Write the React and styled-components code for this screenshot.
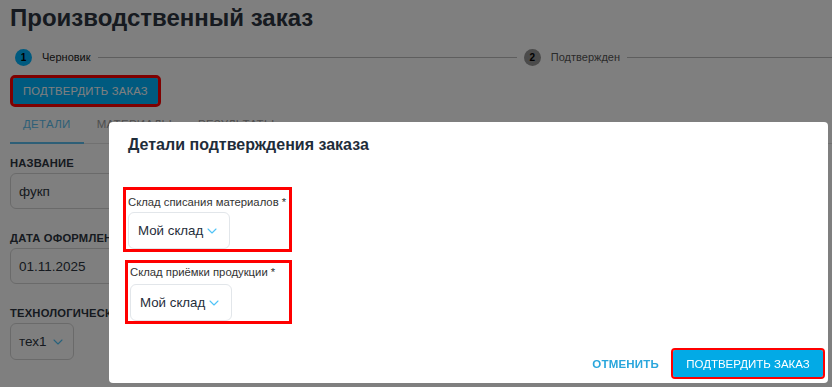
import React from 'react';
import styled, { createGlobalStyle } from 'styled-components';
import { ChevronDown } from 'lucide-react';

const GlobalStyle = createGlobalStyle`
  html, body {
    margin: 0;
    padding: 0;
    background: #fff;
    font-family: "Liberation Sans", Arial, sans-serif;
    color: #2c3e50;
    overflow: hidden;
  }
`;

const Page = styled.div`
  padding: 3px 0 0 10px;
  height: 387px;
  box-sizing: border-box;
`;

const Title = styled.h1`
  margin: 0;
  font-size: 24px;
  line-height: 30px;
  font-weight: 700;
  color: #2c3440;
`;

const Stepper = styled.div`
  display: flex;
  align-items: center;
  margin: 15px 0 0 5px;
  height: 18px;
`;

const StepCircle = styled.span`
  width: 17px;
  height: 17px;
  border-radius: 50%;
  background: ${p => (p.$active ? '#00b4fe' : '#969696')};
  color: #000;
  font-size: 10px;
  font-weight: 700;
  display: flex;
  align-items: center;
  justify-content: center;
  flex: 0 0 auto;
`;

const StepLabel = styled.span`
  font-size: 11px;
  color: ${p => (p.$active ? '#222' : '#555')};
  margin: 0 7px 0 10px;
  white-space: nowrap;
`;

const Connector = styled.span`
  height: 1px;
  background: #bdbdbd;
  flex: ${p => (p.$width ? `0 0 ${p.$width}px` : '1')};
  margin-right: ${p => (p.$width ? '0' : '7px')};
`;

const PageButton = styled.button`
  margin: 12px 0 0 3px;
  height: 26px;
  padding: 0 10px;
  border: none;
  border-radius: 2px;
  background: #00b4fe;
  color: #fff;
  font-family: inherit;
  font-size: 11.3px;
  font-weight: 500;
  letter-spacing: 0.2px;
  text-transform: uppercase;
  outline: 3px solid #ff0000;
`;

const Tabs = styled.div`
  display: flex;
  border-bottom: 1px solid #e2e2e2;
`;

const Tab = styled.div`
  padding: 13px 13px 11px;
  font-size: 11.5px;
  line-height: 14px;
  letter-spacing: 0.3px;
  text-transform: uppercase;
  color: ${p => (p.$active ? '#5dbfee' : '#9c9c9c')};
  border-bottom: 2px solid ${p => (p.$active ? '#5dbfee' : 'transparent')};
  margin-bottom: -1px;
`;

const Form = styled.div`
  display: flex;
  flex-direction: column;
  align-items: flex-start;
  padding-top: 12px;
`;

const FieldLabel = styled.div`
  font-size: 11.2px;
  font-weight: 700;
  letter-spacing: 0.2px;
  text-transform: uppercase;
  color: #2c3440;
  line-height: 14px;
  margin-bottom: 3px;
  white-space: nowrap;
`;

const TextBox = styled.div`
  width: 200px;
  height: 36px;
  box-sizing: border-box;
  border: 1px solid #d5d5d5;
  border-radius: 6px;
  display: flex;
  align-items: center;
  padding: 0 8px;
  font-size: 13.5px;
  color: #2c3440;
  margin-bottom: 22px;
`;

const SelectBox = styled.div`
  display: inline-flex;
  align-items: center;
  gap: ${p => (p.$compact ? '3px' : '1px')};
  height: 37px;
  box-sizing: border-box;
  border: 1px solid ${p => (p.$compact ? '#d5d5d5' : '#e2e6ea')};
  border-radius: 6px;
  padding: ${p => (p.$compact ? '0 7px 0 8px' : '0 9px 0 9px')};
  font-size: 13.5px;
  white-space: nowrap;
  color: #2c3440;
  background: #fff;
  svg {
    color: #4fc3f7;
    flex: 0 0 auto;
  }
`;

const Overlay = styled.div`
  position: fixed;
  inset: 0;
  background: rgba(0, 0, 0, 0.5);
  display: flex;
  padding: 122px 4px 4px 109px;
`;

const Dialog = styled.div`
  flex: 1;
  background: #fff;
  border-radius: 4px;
  display: flex;
  flex-direction: column;
`;

const DialogTitle = styled.h2`
  margin: 0;
  padding: 13px 19px 0;
  font-size: 16px;
  line-height: 20px;
  font-weight: 700;
  color: #1f2d3a;
`;

const DialogBody = styled.div`
  display: flex;
  flex-direction: column;
  gap: 8px;
  padding: 32px 0 0 14px;
`;

const Highlight = styled.div`
  box-sizing: border-box;
  width: ${p => p.$width}px;
  border: 3px solid #ff0000;
  padding: ${p => p.$top}px 2px 0 2px;
  margin-left: ${p => p.$shift || 0}px;
  display: flex;
  flex-direction: column;
  align-items: flex-start;
  gap: ${p => p.$gap}px;
`;

const ModalLabel = styled.div`
  font-size: 11.3px;
  line-height: 13px;
  color: #333;
  white-space: nowrap;
`;

const ModalSelect = styled(SelectBox)`
  font-size: 13.3px;
  color: #1f2d3a;
`;

const Footer = styled.div`
  margin-top: auto;
  display: flex;
  justify-content: flex-end;
  align-items: center;
  gap: 14px;
  padding: 0 5px 6px 0;
`;

const TextButton = styled.button`
  border: none;
  background: none;
  padding: 0;
  font-family: inherit;
  font-size: 11.5px;
  font-weight: 700;
  letter-spacing: 0.2px;
  color: #29a6dc;
  text-transform: uppercase;
`;

const PrimaryButton = styled.button`
  height: 27px;
  width: 150px;
  border: none;
  border-radius: 2px;
  background: #02aae6;
  color: #fff;
  font-family: inherit;
  font-size: 11.5px;
  font-weight: 500;
  text-transform: uppercase;
  outline: 2px solid #ff0000;
`;

export default function App() {
  return (
    <>
      <GlobalStyle />
      <Page>
        <Title>Производственный заказ</Title>
        <Stepper>
          <StepCircle $active>1</StepCircle>
          <StepLabel $active>Черновик</StepLabel>
          <Connector />
          <StepCircle>2</StepCircle>
          <StepLabel>Подтвержден</StepLabel>
          <Connector $width={205} />
        </Stepper>
        <PageButton>Подтвердить заказ</PageButton>
        <Tabs>
          <Tab $active>Детали</Tab>
          <Tab>Материалы</Tab>
          <Tab>Результаты</Tab>
        </Tabs>
        <Form>
          <FieldLabel>Название</FieldLabel>
          <TextBox>фукп</TextBox>
          <FieldLabel>Дата оформления</FieldLabel>
          <TextBox>01.11.2025</TextBox>
          <FieldLabel>Технологическая карта</FieldLabel>
          <SelectBox $compact>
            тех1 <ChevronDown size={16} strokeWidth={1.6} />
          </SelectBox>
        </Form>
      </Page>
      <Overlay>
        <Dialog>
          <DialogTitle>Детали подтверждения заказа</DialogTitle>
          <DialogBody>
            <Highlight $width={169} $top={6} $gap={3}>
              <ModalLabel>Склад списания материалов *</ModalLabel>
              <ModalSelect>
                Мой склад <ChevronDown size={16} strokeWidth={1.6} />
              </ModalSelect>
            </Highlight>
            <Highlight $width={167} $shift={2} $top={3} $gap={5}>
              <ModalLabel>Склад приёмки продукции *</ModalLabel>
              <ModalSelect>
                Мой склад <ChevronDown size={16} strokeWidth={1.6} />
              </ModalSelect>
            </Highlight>
          </DialogBody>
          <Footer>
            <TextButton>Отменить</TextButton>
            <PrimaryButton>Подтвердить заказ</PrimaryButton>
          </Footer>
        </Dialog>
      </Overlay>
    </>
  );
}
